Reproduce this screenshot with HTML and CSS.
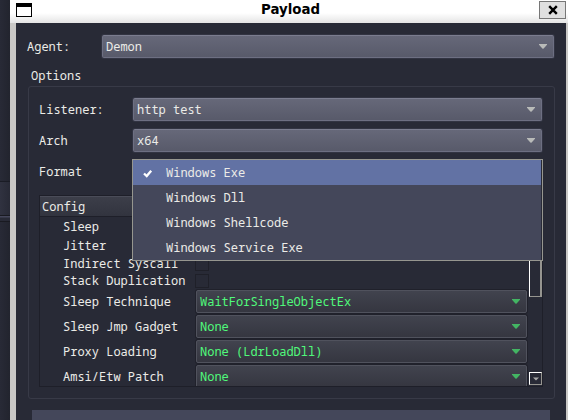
FILE: index.html
```
<!DOCTYPE html>
<html lang="en">
<head>
<meta charset="utf-8">
<title>Payload</title>
<link rel="stylesheet" href="styles.css">
</head>
<body>
<div class="desktop">
  <div class="behind"><div class="behind-bar"></div><div class="behind-line"></div></div>
  <div class="window">
    <header class="titlebar">
      <svg class="win-icon" width="16" height="14" viewBox="0 0 16 14" shape-rendering="crispEdges"><rect width="16" height="14" fill="#000"/><rect x="1" y="4" width="14" height="9" fill="#fff"/></svg>
      <span class="title">Payload</span>
      <button class="close" aria-label="Close"><svg width="10" height="10" viewBox="0 0 10 10"><path d="M1.2 1.2L8.8 8.8M8.8 1.2L1.2 8.8" stroke="#000" stroke-width="2.4"/></svg></button>
    </header>
    <main class="dialog">
      <div class="agent-row"><label>Agent:</label><div class="combo"><span>Demon</span><i class="arrow"></i></div></div>
      <div class="options-title">Options</div>
      <section class="group">
        <div class="field"><label>Listener:</label><div class="combo"><span>http test</span><i class="arrow"></i></div></div>
        <div class="field"><label>Arch</label><div class="combo"><span>x64</span><i class="arrow"></i></div></div>
        <div class="field"><label>Format</label>
          <div class="format-slot">
            <ul class="menu">
              <li class="selected"><svg class="check" width="10" height="9" viewBox="0 0 10 9"><path d="M1 4.5L3.7 7L8.2 1.7" fill="none" stroke="#fff" stroke-width="2.3"/></svg>Windows Exe</li>
              <li>Windows Dll</li>
              <li>Windows Shellcode</li>
              <li>Windows Service Exe</li>
            </ul>
          </div>
        </div>
        <div class="tree">
          <div class="tree-head">Config</div>
          <div class="tree-body">
            <div class="rows">
              <div class="row mid"><span>Sleep</span></div>
              <div class="row mid"><span>Jitter</span></div>
              <div class="row small"><span>Indirect Syscall</span><i class="box"></i></div>
              <div class="row small"><span>Stack Duplication</span><i class="box"></i></div>
              <div class="row"><span>Sleep Technique</span><div class="combo green"><span>WaitForSingleObjectEx</span><i class="arrow"></i></div></div>
              <div class="row"><span>Sleep Jmp Gadget</span><div class="combo green"><span>None</span><i class="arrow"></i></div></div>
              <div class="row"><span>Proxy Loading</span><div class="combo green"><span>None (LdrLoadDll)</span><i class="arrow"></i></div></div>
              <div class="row"><span>Amsi/Etw Patch</span><div class="combo green"><span>None</span><i class="arrow"></i></div></div>
            </div>
            <div class="scroll"><div class="thumb"></div><div class="down"><svg width="6" height="4" viewBox="0 0 6 4"><path d="M0 .5H6L3 3.5Z" fill="#aaa"/></svg></div></div>
          </div>
        </div>
      </section>
      <div class="generate"></div>
    </main>
  </div>
</div>
</body>
</html>
```
FILE: styles.css
```
* { box-sizing: border-box; }
body {
  margin: 0;
  background: #282a36;
  color: #ecece8;
  font: 12px/16px "Noto Sans Mono", "DejaVu Sans Mono", monospace;
}
.desktop { display: flex; width: 568px; height: 420px; overflow: hidden; }
.behind { width: 10px; padding-top: 181px; background: linear-gradient(90deg, #282a36, #22242e); }
.behind-bar { height: 34px; border-top: 1px solid #1a1c25; background: linear-gradient(90deg, #303240, #282a36); }
.behind-line { height: 7px; border-top: 1px solid #191a21; border-bottom: 1px solid #191a21; background: linear-gradient(#44465a 1px, #282a36 2px); }
.window { width: 558px; }
.titlebar {
  display: flex;
  align-items: flex-start;
  height: 23px;
  padding: 1px 2px 0 6px;
  background: linear-gradient(#fff 0 13px, #e4e4e4);
}
.win-icon { margin-top: 2px; }
.title {
  flex: 1;
  padding: 1px 0 0 10px;
  text-align: center;
  color: #000;
  font: bold 13.33px/16px "DejaVu Sans", sans-serif;
}
.close {
  display: flex;
  align-items: center;
  justify-content: center;
  width: 27px;
  height: 18px;
  padding: 0;
  border: 1px solid #777;
  background: #e0e0e0;
}
.dialog {
  height: 397px;
  padding: 12px 11px 0 11px;
  border-left: 6px solid #c9c8c6;
  border-right: 2px solid #c9c8c6;
  background: #282a36;
}
.agent-row { display: flex; height: 23px; align-items: center; }
.agent-row label { width: 75px; }
.combo {
  display: flex;
  flex: 1;
  align-items: center;
  justify-content: space-between;
  height: 23px;
  padding: 0 6px 0 3px;
  border: 1px solid #6d6f82;
  border-top-color: #7b7d8f;
  border-radius: 2px;
  background: linear-gradient(#666879, #585a6a);
  box-shadow: 0 0 0 1px #323442;
}
.arrow { width: 8px; height: 5px; background: #b9bbb9; clip-path: polygon(0 0, 100% 0, 100% 15%, 55% 95%, 45% 95%, 0 15%); }
.options-title { margin: 10px 0 0 4px; height: 18px; }
.group {
  width: 527px;
  height: 313px;
  margin-left: 1px;
  padding: 11px 11px 0 10px;
  border: 1px solid #383a47;
  border-radius: 3px;
}
.agent-row .combo { margin-right: 1px; }
.field { display: flex; align-items: center; height: 23px; margin-bottom: 8px; }
.field label { width: 94px; }
.field .combo { margin-right: 1px; }
.format-slot { position: relative; flex: 1; height: 23px; }
.menu {
  position: absolute;
  z-index: 2;
  top: -1px;
  left: -1px;
  width: 411px;
  height: 102px;
  margin: 0;
  padding: 0 1px 0 0;
  border: 1px solid #96968f;
  background: #282a36;
  list-style: none;
}
.menu li { position: relative; height: 25px; padding-left: 33px; line-height: 26px; background: #44475a; }
.menu li.selected { background: #6272a4; }
.check { position: absolute; left: 10px; top: 9px; }
.tree { width: 504px; height: 192px; margin-top: 12px; border: 1px solid #1e1f29; overflow: hidden; }
.tree-head {
  height: 21px;
  padding-left: 2px;
  border-top: 1px solid #4a4c58;
  border-bottom: 1px solid #1e1f29;
  background: linear-gradient(#3c3e49, #32343f);
  line-height: 20px;
}
.tree-body { display: flex; height: 169px; }
.rows { width: 488px; height: 169px; overflow: hidden; }
.row { display: flex; align-items: center; height: 25px; padding-left: 23px; }
.row > span { width: 133px; white-space: nowrap; }
.row.mid { height: 19px; }
.row.small { height: 17px; }
.row .box { margin-left: -1px; }
.box { width: 14px; height: 14px; border: 1px solid #1f2029; }
.combo.green {
  flex: none;
  width: 331px;
  border-color: #50525d;
  background: linear-gradient(#41434e, #353640);
  box-shadow: 0 0 0 1px #20212b;
  color: #50fa7b;
}
.green .arrow { background: #43b563; }
.scroll { display: flex; flex-direction: column; justify-content: space-between; width: 13px; margin-left: 1px; padding-bottom: 1px; }
.thumb { height: 80px; border: 1px solid #fff; border-right: 2px solid #969590; border-bottom-color: #969590; }
.down { display: flex; height: 13px; align-items: center; justify-content: center; border: 1px solid #fff; border-right-color: #969590; border-bottom-color: #969590; }
.generate { width: 518px; height: 20px; margin: 11px 0 0 5px; background: #44475a; }
```
